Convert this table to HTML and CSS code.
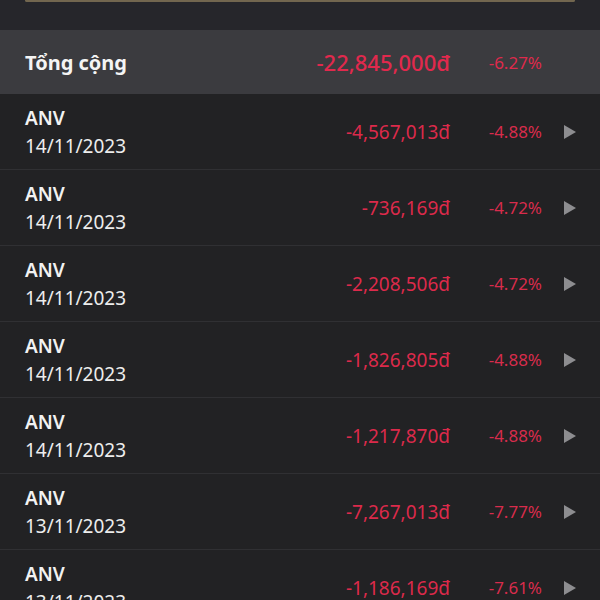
FILE: index.html
```html
<!DOCTYPE html>
<html lang="vi">
<head>
<meta charset="utf-8">
<link rel="stylesheet" href="styles.css">
</head>
<body>
<div class="top">
  <div class="top-card"></div>
</div>
<div class="total">
  <div class="total-label">Tổng cộng</div>
  <div class="total-amount">-22,845,000đ</div>
  <div class="total-pct">-6.27%</div>
  <div class="arrow-col"></div>
</div>
<div class="list">
  <div class="row">
    <div class="info"><div class="code">ANV</div><div class="date">14/11/2023</div></div>
    <div class="amount">-4,567,013đ</div>
    <div class="pct">-4.88%</div>
    <div class="arrow-col"><span class="tri"></span></div>
  </div>
  <div class="row">
    <div class="info"><div class="code">ANV</div><div class="date">14/11/2023</div></div>
    <div class="amount">-736,169đ</div>
    <div class="pct">-4.72%</div>
    <div class="arrow-col"><span class="tri"></span></div>
  </div>
  <div class="row">
    <div class="info"><div class="code">ANV</div><div class="date">14/11/2023</div></div>
    <div class="amount">-2,208,506đ</div>
    <div class="pct">-4.72%</div>
    <div class="arrow-col"><span class="tri"></span></div>
  </div>
  <div class="row">
    <div class="info"><div class="code">ANV</div><div class="date">14/11/2023</div></div>
    <div class="amount">-1,826,805đ</div>
    <div class="pct">-4.88%</div>
    <div class="arrow-col"><span class="tri"></span></div>
  </div>
  <div class="row">
    <div class="info"><div class="code">ANV</div><div class="date">14/11/2023</div></div>
    <div class="amount">-1,217,870đ</div>
    <div class="pct">-4.88%</div>
    <div class="arrow-col"><span class="tri"></span></div>
  </div>
  <div class="row">
    <div class="info"><div class="code">ANV</div><div class="date">13/11/2023</div></div>
    <div class="amount">-7,267,013đ</div>
    <div class="pct">-7.77%</div>
    <div class="arrow-col"><span class="tri"></span></div>
  </div>
  <div class="row">
    <div class="info"><div class="code">ANV</div><div class="date">13/11/2023</div></div>
    <div class="amount">-1,186,169đ</div>
    <div class="pct">-7.61%</div>
    <div class="arrow-col"><span class="tri"></span></div>
  </div>
</div>
</body>
</html>
```
FILE: styles.css
```css
html, body {
  margin: 0;
  padding: 0;
  background: #222224;
  font-family: "Noto Sans", "Open Sans", sans-serif;
  color: #f2f2f2;
  overflow: hidden;
}
.top {
  height: 30px;
  background: #26262b;
}
.top-card {
  margin: 0 25px;
  height: 0;
  border: 2px solid #72664f;
  border-top: none;
  border-radius: 0 0 6px 6px;
  background: #2c2b2c;
}
.total {
  height: 64px;
  background: #3b3b3f;
  display: flex;
  align-items: center;
  padding-left: 25px;
}
.total-label {
  flex: 1;
  font-weight: 700;
  font-size: 20px;
  color: #f4f4f4;
}
.total-amount {
  color: #e1294d;
  font-size: 22px;
  font-weight: 500;
  text-align: right;
}
.total-pct {
  width: 92px;
  text-align: right;
  color: #df2a4c;
  font-size: 17px;
}
.arrow-col {
  width: 58px;
  display: flex;
  align-items: center;
  padding-left: 22px;
  box-sizing: border-box;
}
.row {
  height: 76px;
  box-sizing: border-box;
  border-bottom: 1px solid #303033;
  display: flex;
  align-items: center;
  padding-left: 25px;
}
.info {
  flex: 1;
  display: flex;
  flex-direction: column;
}
.code {
  font-size: 19px;
  font-weight: 600;
  line-height: 28px;
}
.date {
  font-size: 19px;
  line-height: 28px;
  color: #ededed;
}
.amount {
  color: #dc2a4b;
  font-size: 19px;
  text-align: right;
}
.pct {
  width: 92px;
  text-align: right;
  color: #d82c4c;
  font-size: 17px;
}
.tri {
  width: 0;
  height: 0;
  border-left: 12px solid #8d8d90;
  border-top: 7px solid transparent;
  border-bottom: 7px solid transparent;
}
```
